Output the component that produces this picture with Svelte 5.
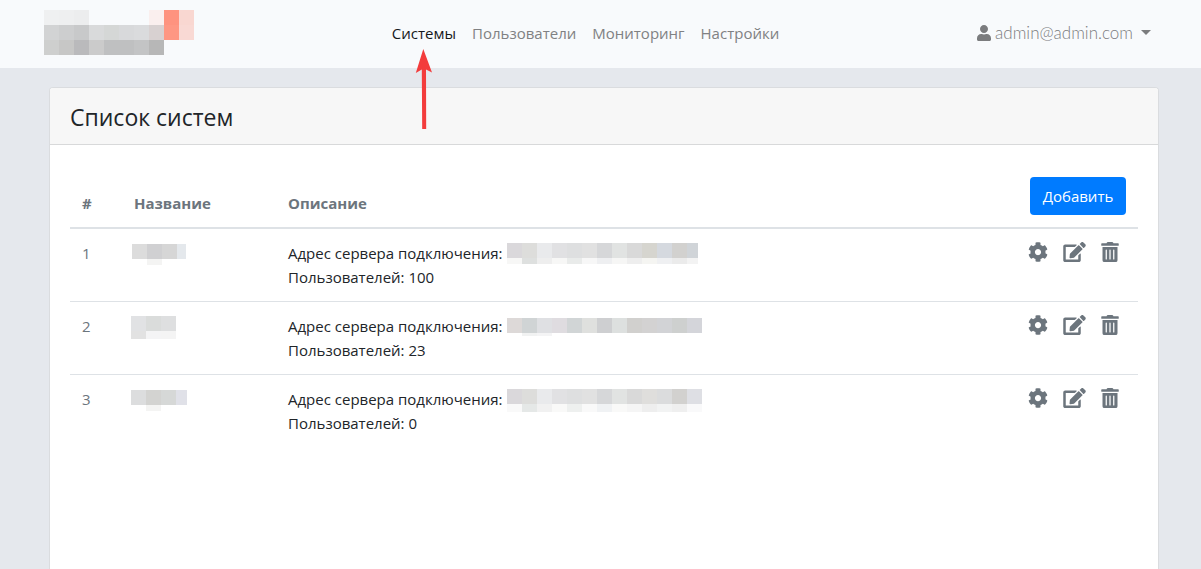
<script>
  const cell = 15;

  const logo = {
    width: 150,
    height: 45,
    rows: [
      { y: 0, h: 15, x: 0, w: 150, colors: ['#eff0f1', '#eeeff0', '#ecedee', '', '', '', '', '#faefee', '#fe937f', '#f9d7d1'] },
      { y: 15, h: 15, x: 0, w: 150, colors: ['#d2d3d4', '#cdcecf', '#c8c9ca', '#d9dadb', '#d5d7d6', '#d8d9db', '#dadbdd', '#d8d1d1', '#fe9783', '#f9d9d4'] },
      { y: 30, h: 15, x: 0, w: 120, colors: ['#cecfce', '#c7c7c6', '#bababc', '#cbcbcb', '#bfc0c1', '#bfc0c1', '#c3c4c5', '#b7b7b7'] }
    ]
  };

  const systems = [
    {
      id: 1,
      users: 100,
      name: {
        width: 54,
        height: 24,
        shift: 10,
        rows: [
          { y: 3, h: 15, x: 0, w: 54, colors: ['#dcdcdc', '#d0d0d2', '#d6d6d6', '#e4e8ec'] },
          { y: 18, h: 6, x: 15, w: 15, colors: ['#f4f4f3'] }
        ]
      },
      address: {
        width: 191,
        height: 24,
        rows: [
          { y: 2, h: 15, x: 0, w: 191, colors: ['#dad8db', '#dddddb', '#e9eaec', '#e1e1e3', '#dedfe0', '#e1e1e1', '#d6d7d9', '#e1e3e2', '#d9d9d9', '#d6d5cf', '#d5d9df', '#d2d1cf', '#d0d4d8'] },
          { y: 17, h: 6, x: 0, w: 191, colors: ['#f7f7f6', '#dee0df', '#eeeeee', '#f7f7f6', '#e9ebea', '#f7f7f7', '#eeeff1', '#f6f6f5', '#eeeeee', '#f5f5f2', '#eff0f2', '#ebebeb', '#f3f3f3'] }
        ]
      }
    },
    {
      id: 2,
      users: 23,
      name: {
        width: 45,
        height: 24,
        shift: 9,
        rows: [
          { y: 2, h: 15, x: 0, w: 45, colors: ['#e1e2e4', '#dadcdb', '#dedfe0'] },
          { y: 17, h: 8, x: 0, w: 45, colors: ['#e2e2e2', '#f4f4f5', '#f4f4f4'] }
        ]
      },
      address: {
        width: 195,
        height: 24,
        rows: [
          { y: 4, h: 15, x: 0, w: 195, colors: ['#ddd9d8', '#d0d4d5', '#dfe0e3', '#dfdce0', '#d1d5d6', '#dfe0de', '#cecfd1', '#dde0df', '#d1d0ce', '#d3d2d2', '#d2d3d6', '#ced0cf', '#d4d5da'] },
          { y: 19, h: 3, x: 15, w: 30, colors: ['#f1f2f2', '#f4f4f5'] }
        ]
      }
    },
    {
      id: 3,
      users: 0,
      name: {
        width: 56,
        height: 24,
        shift: 9,
        rows: [
          { y: 3, h: 15, x: 0, w: 56, colors: ['#dcddde', '#d3d3d1', '#d6d8d7', '#e0e1e8'] },
          { y: 18, h: 6, x: 15, w: 15, colors: ['#f4f4f3'] }
        ]
      },
      address: {
        width: 195,
        height: 24,
        rows: [
          { y: 2, h: 15, x: 0, w: 195, colors: ['#dad8db', '#dddddb', '#e9eaec', '#e1e1e3', '#dedfe0', '#e1e1e1', '#d6d7d9', '#e1e3e2', '#d9d9d9', '#dfdedc', '#dbdcdd', '#d2d1cf', '#dedfe4'] },
          { y: 17, h: 8, x: 0, w: 195, colors: ['#f9f9f9', '#e5e8e7', '#f1f1f1', '#f9f9f8', '#eef0ef', '#f9f9f9', '#f0f2f4', '#f9f9f8', '#f5f5f5', '#eeeeee', '#f2f3f3', '#efefef', '#f9f9fa'] }
        ]
      }
    }
  ];
</script>

{#snippet mosaic(m)}
  <svg class="mosaic" width={m.width} height={m.height} shape-rendering="crispEdges" aria-hidden="true">
    {#each m.rows as row}
      {#each row.colors as color, i}
        {#if color}
          <rect x={row.x + i * cell} y={row.y} width={Math.min(cell, row.w - i * cell)} height={row.h} fill={color} />
        {/if}
      {/each}
    {/each}
  </svg>
{/snippet}

<div class="page">
  <header>
    <a class="brand" href="#home" aria-label="Главная">{@render mosaic(logo)}</a>
    <nav>
      <a class="active" href="#systems">
        Системы
        <svg class="arrow" width="18" height="80" viewBox="0 0 18 80" aria-hidden="true">
          <path d="M8.3 0 L17 23.5 L11 20.5 L11.2 80 H7.2 L6.8 20.5 L0.8 24 Z" fill="#f33c3c" />
        </svg>
      </a>
      <a href="#users">Пользователи</a>
      <a href="#monitoring">Мониторинг</a>
      <a href="#settings">Настройки</a>
    </nav>
    <button class="account" type="button">
      <svg width="14" height="16" viewBox="0 0 448 512" aria-hidden="true"><path fill="currentColor" d="M224 256c70.7 0 128-57.3 128-128S294.7 0 224 0 96 57.3 96 128s57.3 128 128 128zm89.6 32h-16.7c-22.2 10.2-46.9 16-72.9 16s-50.6-5.8-72.9-16h-16.7C60.2 288 0 348.2 0 422.4V464c0 26.5 21.5 48 48 48h352c26.5 0 48-21.5 48-48v-41.6c0-74.2-60.2-134.4-134.4-134.4z" /></svg>
      <span>admin@admin.com</span>
      <i class="caret"></i>
    </button>
  </header>

  <main>
    <h1>Список систем</h1>
    <div class="body">
      <table>
        <thead>
          <tr>
            <th class="num">#</th>
            <th class="name">Название</th>
            <th>Описание</th>
            <th class="tools"><button class="add" type="button">Добавить</button></th>
          </tr>
        </thead>
        <tbody>
          {#each systems as s}
            <tr>
              <td class="muted">{s.id}</td>
              <td><div style:margin-left="{s.name.shift - 12}px">{@render mosaic(s.name)}</div></td>
              <td>
                <div class="address"><span>Адрес сервера подключения:</span>{@render mosaic(s.address)}</div>
                <div>Пользователей: {s.users}</div>
              </td>
              <td>
                <div class="actions">
                  <button type="button" aria-label="Параметры"><svg width="20" height="20" viewBox="0 0 512 512"><path fill="currentColor" d="M487.4 315.7l-42.6-24.6c4.3-23.2 4.3-47 0-70.2l42.6-24.6c4.9-2.8 7.1-8.6 5.5-14-11.1-35.6-30-67.8-54.7-94.6-3.8-4.1-10-5.1-14.8-2.3L380.8 110c-17.9-15.4-38.5-27.3-60.8-35.1V25.8c0-5.6-3.9-10.5-9.4-11.7-36.7-8.2-74.3-7.8-109.2 0-5.5 1.2-9.4 6.1-9.4 11.7V75c-22.2 7.9-42.8 19.8-60.8 35.1L88.7 85.5c-4.9-2.8-11-1.9-14.8 2.3-24.7 26.7-43.6 58.9-54.7 94.6-1.7 5.4.6 11.2 5.5 14L67.3 221c-4.3 23.2-4.3 47 0 70.2l-42.6 24.6c-4.9 2.8-7.1 8.6-5.5 14 11.1 35.6 30 67.8 54.7 94.6 3.8 4.1 10 5.1 14.8 2.3l42.6-24.6c17.9 15.4 38.5 27.3 60.8 35.1v49.2c0 5.6 3.9 10.5 9.4 11.7 36.7 8.2 74.3 7.8 109.2 0 5.5-1.2 9.4-6.1 9.4-11.7v-49.2c22.2-7.9 42.8-19.8 60.8-35.1l42.6 24.6c4.9 2.8 11 1.9 14.8-2.3 24.7-26.7 43.6-58.9 54.7-94.6 1.5-5.5-.7-11.3-5.6-14.1zM256 336c-44.1 0-80-35.9-80-80s35.9-80 80-80 80 35.9 80 80-35.9 80-80 80z" /></svg></button>
                  <button type="button" aria-label="Изменить"><svg width="23" height="20" viewBox="0 0 576 512"><path fill="currentColor" d="M402.6 83.2l90.2 90.2c3.8 3.8 3.8 10 0 13.8L274.4 405.6l-92.8 10.3c-12.4 1.4-22.9-9.1-21.5-21.5l10.3-92.8L388.8 83.2c3.8-3.8 10-3.8 13.8 0zm162-22.9l-48.8-48.8c-15.2-15.2-39.9-15.2-55.2 0l-35.4 35.4c-3.8 3.8-3.8 10 0 13.8l90.2 90.2c3.8 3.8 10 3.8 13.8 0l35.4-35.4c15.2-15.3 15.2-40 0-55.2zM384 346.2V448H64V128h229.8c3.2 0 6.2-1.3 8.5-3.5l40-40c7.6-7.6 2.2-20.5-8.5-20.5H48C21.5 64 0 85.5 0 112v352c0 26.5 21.5 48 48 48h352c26.5 0 48-21.5 48-48V306.2c0-10.7-12.9-16-20.5-8.5l-40 40c-2.2 2.3-3.5 5.3-3.5 8.5z" /></svg></button>
                  <button type="button" aria-label="Удалить"><svg width="18" height="20" viewBox="0 0 448 512"><path fill="currentColor" d="M32 464a48 48 0 0 0 48 48h288a48 48 0 0 0 48-48V128H32zm272-256a16 16 0 0 1 32 0v224a16 16 0 0 1-32 0zm-96 0a16 16 0 0 1 32 0v224a16 16 0 0 1-32 0zm-96 0a16 16 0 0 1 32 0v224a16 16 0 0 1-32 0zM432 32H312l-9.4-18.7A24 24 0 0 0 281.1 0H166.8a23.72 23.72 0 0 0-21.4 13.3L136 32H16A16 16 0 0 0 0 48v32a16 16 0 0 0 16 16h416a16 16 0 0 0 16-16V48a16 16 0 0 0-16-16z" /></svg></button>
                </div>
              </td>
            </tr>
          {/each}
        </tbody>
      </table>
    </div>
  </main>
</div>

<style>
  :global(body) {
    background: #e5e8ed;
  }
  .page {
    box-sizing: border-box;
    height: 100vh;
    overflow: hidden;
    display: flex;
    flex-direction: column;
    font-family: 'Open Sans', 'Noto Sans', sans-serif;
    font-size: 15px;
    font-weight: 400;
    line-height: 24px;
    color: #212529;
  }
  button {
    font: inherit;
    border: 0;
    background: none;
    cursor: pointer;
  }
  header {
    display: flex;
    align-items: center;
    flex: none;
    padding: 10px 42px 13px 44px;
    background: #f8fafc;
  }
  .mosaic {
    display: block;
    flex: none;
    overflow: visible;
  }
  .brand {
    margin-right: 8px;
  }
  nav {
    display: flex;
    margin: 0 auto;
  }
  nav a {
    position: relative;
    padding: 8px;
    color: #808183;
    text-decoration: none;
  }
  nav a.active {
    color: #16181b;
  }
  .arrow {
    position: absolute;
    top: 36px;
    left: 31px;
  }
  .account {
    display: flex;
    align-items: center;
    gap: 4px;
    padding: 8px;
    color: #7b7c7e;
  }
  .account span {
    font-family: Lato, 'Open Sans', sans-serif;
    font-size: 17px;
    font-weight: 300;
  }
  .caret {
    margin-left: 4px;
    border: 5px solid transparent;
    border-top-color: currentColor;
    border-bottom: 0;
  }
  main {
    flex: 1 0 auto;
    margin: 19px 42px 0 49px;
    border: 1px solid #dadcdf;
    border-bottom: 0;
    border-radius: 4px 4px 0 0;
    background: #fff;
    overflow: hidden;
  }
  h1 {
    margin: 0;
    padding: 13px 20px 11px;
    border-bottom: 1px solid #d8d9da;
    background: #f7f7f7;
    font-size: 23px;
    font-weight: 400;
    line-height: 32px;
  }
  .body {
    padding: 20px;
  }
  table {
    width: 100%;
    border-spacing: 0;
    table-layout: fixed;
  }
  th,
  td {
    padding: 12px;
    text-align: left;
    vertical-align: top;
  }
  th {
    vertical-align: bottom;
    border-bottom: 2px solid #dee2e6;
    color: #6c757d;
    font-weight: 700;
  }
  tbody tr + tr td {
    border-top: 1px solid #dee2e6;
  }
  .num {
    width: 28px;
  }
  .name {
    width: 130px;
  }
  .tools {
    width: 98px;
    text-align: right;
  }
  .muted {
    color: #6c757d;
  }
  .add {
    display: block;
    width: 96px;
    height: 38px;
    margin-left: auto;
    padding: 0;
    border-radius: 4px;
    background: #007bff;
    color: #fff;
    font-weight: 400;
  }
  .address {
    display: flex;
    gap: 4px;
  }
  .actions {
    display: flex;
    gap: 15px;
    color: #6c757d;
  }
  .actions button {
    display: flex;
    padding: 1px 0;
    color: inherit;
  }
</style>
